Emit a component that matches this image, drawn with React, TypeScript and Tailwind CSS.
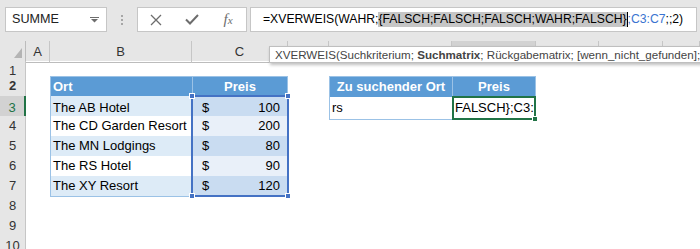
import React from "react";

const GRID =
  "grid grid-cols-[26px_24px_142px_96px_41px_123px_84px_63px_64px_1fr]";

const hotels: [string, number][] = [
  ["The AB Hotel", 100],
  ["The CD Garden Resort", 200],
  ["The MN Lodgings", 80],
  ["The RS Hotel", 90],
  ["The XY Resort", 120],
];

const RowHead = ({ n, active }: { n: number; active?: boolean }) => (
  <div
    className={
      active
        ? "flex items-center justify-center bg-[#d2d2d2] border-b border-b-[#bdbdbd] border-r-2 border-r-[#217346] text-[#217346] text-[13px]"
        : "flex items-center justify-center bg-[#e6e6e6] border-b border-b-[#d4d4d4] border-r border-r-[#c6c6c6] text-[#333] text-[13px]"
    }
  >
    {n}
  </div>
);

const Empty = ({ count }: { count: number }) => (
  <>
    {Array.from({ length: count }).map((_, i) => (
      <div key={i} />
    ))}
  </>
);

const Handle = ({ className }: { className: string }) => (
  <div
    className={`absolute w-[6px] h-[6px] bg-[#4472c4] border border-white ${className}`}
  />
);

export default function App() {
  return (
    <div className="relative w-[700px] h-[249px] overflow-hidden bg-white font-['Liberation_Sans',Arial,sans-serif] text-black">
      {/* formula bar */}
      <div className="h-[41px] bg-[#e6e6e6] flex items-start pt-[7px] pl-[5px]">
        <div className="w-[102px] h-[25px] bg-white border border-[#c6c6c6] flex items-center justify-between pl-[6px] pr-[7px]">
          <span className="text-[12.6px] text-[#222]">SUMME</span>
          <svg width="9" height="6" viewBox="0 0 9 6">
            <rect x="0" y="0" width="9" height="1" fill="#6d6d6d" />
            <path d="M1 2 H8 L4.5 5.5 Z" fill="#6d6d6d" />
          </svg>
        </div>
        <div className="w-[30px] h-[25px] flex flex-col items-center justify-center gap-[2px]">
          <div className="w-[2px] h-[2px] bg-[#a6a6a6]" />
          <div className="w-[2px] h-[2px] bg-[#a6a6a6]" />
          <div className="w-[2px] h-[2px] bg-[#a6a6a6]" />
        </div>
        <div className="w-[110px] h-[25px] bg-white border border-[#c6c6c6] grid grid-cols-[36px_36px_36px] items-center">
          <div className="flex justify-center">
            <svg width="12" height="12" viewBox="0 0 12 12">
              <path d="M1 1 L11 11 M11 1 L1 11" stroke="#6d6d6d" strokeWidth="1.3" />
            </svg>
          </div>
          <div className="flex justify-center">
            <svg width="14" height="11" viewBox="0 0 14 11">
              <path d="M1 5.5 L5 9.5 L13 1" stroke="#6d6d6d" strokeWidth="2" fill="none" />
            </svg>
          </div>
          <div className="flex justify-center items-baseline font-['Liberation_Serif',serif] italic text-[#6d6d6d]">
            <span className="text-[15px]">f</span>
            <span className="text-[11px]">x</span>
          </div>
        </div>
        <div className="ml-[3px] w-[447px] h-[25px] bg-white border border-[#c6c6c6] flex items-center pl-[12px] whitespace-nowrap text-[12.2px]">
          <span>=XVERWEIS(WAHR;</span>
          <span className="inline-block bg-[#c6c6c6] leading-[15px]">
            {"{FALSCH;FALSCH;FALSCH;WAHR;FALSCH}"}
          </span>
          <span className="inline-block w-px h-[15px] bg-black" />
          <span className="text-[#3a74d1]">;C3:C7</span>
          <span>;;2)</span>
        </div>
      </div>

      {/* column headers */}
      <div className={`${GRID} h-[20px] bg-[#e6e6e6] text-[13px] text-[#333]`}>
        <div className="border-r border-b border-[#bcbcbc] flex items-end justify-end pr-[3px] pb-[4px]">
          <svg width="8" height="10" viewBox="0 0 8 10">
            <path d="M8 0 V10 H0 Z" fill="#b4b4b4" />
          </svg>
        </div>
        {["A", "B", "C", "D", "E"].map((c) => (
          <div
            key={c}
            className="border-r border-r-[#c6c6c6] border-b border-b-[#bcbcbc] flex items-center justify-center"
          >
            {c}
          </div>
        ))}
        <div className="bg-[#d2d2d2] border-r border-r-[#c6c6c6] border-b-2 border-b-[#217346] flex items-center justify-center text-[#217346]">
          F
        </div>
        {["G", "H", "I", "J"].map((c) => (
          <div
            key={c}
            className="border-r border-r-[#c6c6c6] border-b border-b-[#bcbcbc] flex items-center justify-center"
          >
            {c}
          </div>
        ))}
      </div>

      {/* row 1 */}
      <div className={`${GRID} h-[15px]`}>
        <RowHead n={1} />
        <Empty count={9} />
      </div>

      {/* row 2: table headers */}
      <div className={`${GRID} h-[20px] text-[13px] font-bold text-white`}>
        <RowHead n={2} />
        <div />
        <div className="bg-[#5b9bd5] border-t border-l border-[#9bc2e6] flex items-center pl-[2px]">
          Ort
        </div>
        <div className="bg-[#5b9bd5] border-t border-l border-r border-[#9bc2e6] flex items-center justify-center">
          Preis
        </div>
        <div />
        <div className="bg-[#5b9bd5] border-t border-l border-[#9bc2e6] flex items-center justify-center">
          Zu suchender Ort
        </div>
        <div className="bg-[#5b9bd5] border-t border-l border-r border-[#9bc2e6] flex items-center justify-center">
          Preis
        </div>
        <Empty count={4} />
      </div>

      {/* rows 3-7 */}
      {hotels.map(([name, price], i) => (
        <div key={name} className={`${GRID} h-[20px] text-[13px]`}>
          <RowHead n={i + 3} active={i === 0} />
          <div />
          <div
            className={`${i % 2 === 0 ? "bg-[#ddebf7]" : "bg-white"} border-l border-b border-[#9bc2e6] flex items-center pl-[2px] whitespace-nowrap`}
          >
            {name}
          </div>
          <div
            className={`${i % 2 === 0 ? "bg-[#c9dcf1]" : "bg-[#e9f0f9]"} border-l border-b border-r border-[#9bc2e6] flex items-center justify-between pl-[9px] pr-[7px]`}
          >
            <span>$</span>
            <span>{price}</span>
          </div>
          <div />
          {i === 0 ? (
            <>
              <div className="border-l border-b border-[#9bc2e6] flex items-center pl-[2px]">
                rs
              </div>
              <div className="relative border-2 border-[#217346] flex items-center pl-[1px] whitespace-nowrap">
                <span className="overflow-hidden">{"FALSCH};C3:"}</span>
                <div className="absolute -right-[4px] -bottom-[4px] w-[6px] h-[6px] bg-[#217346] border border-white" />
              </div>
            </>
          ) : (
            <Empty count={2} />
          )}
          <Empty count={4} />
        </div>
      ))}

      {/* rows 8-10 */}
      {[8, 9, 10].map((n) => (
        <div key={n} className={`${GRID} h-[20px]`}>
          <RowHead n={n} />
          <Empty count={9} />
        </div>
      ))}

      {/* range highlight C3:C7 */}
      <div className="absolute left-[191px] top-[95px] w-[98px] h-[102px] border-2 border-[#4472c4]">
        <Handle className="-left-[4px] -top-[4px]" />
        <Handle className="-right-[4px] -top-[4px]" />
        <Handle className="-left-[4px] -bottom-[4px]" />
        <Handle className="-right-[4px] -bottom-[4px]" />
      </div>

      {/* function tooltip */}
      <div className="absolute left-[269px] top-[46px] h-[17px] w-[460px] bg-white border border-[#bfbfbf] shadow-[1px_2px_3px_rgba(0,0,0,0.25)] flex items-center pl-[5px] whitespace-nowrap text-[11.6px] text-[#444]">
        XVERWEIS(Suchkriterium;&nbsp;<b>Suchmatrix</b>; Rückgabematrix; [wenn_nicht_gefunden];
      </div>
    </div>
  );
}
